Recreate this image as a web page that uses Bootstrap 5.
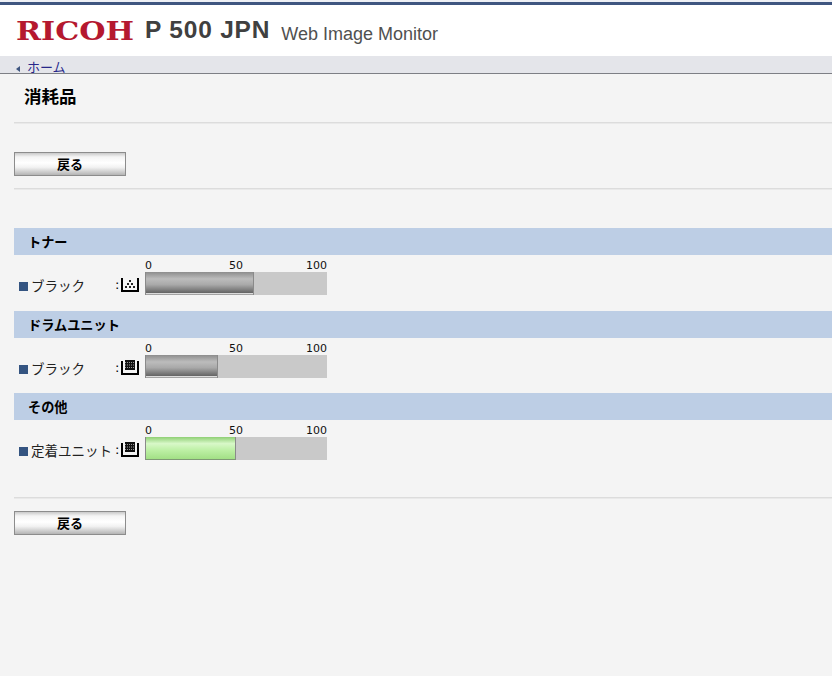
<!DOCTYPE html>
<html lang="ja">
<head>
    <meta charset="UTF-8">
    <title>Web Image Monitor</title>
    <link href="https://cdn.jsdelivr.net/npm/bootstrap@5.3.2/dist/css/bootstrap.min.css" rel="stylesheet">
    <style>
        html, body { height: 100%; }
        body {
            background: #f4f4f4;
            font-family: "Liberation Sans", "Noto Sans CJK JP", sans-serif;
            color: #000;
            overflow: hidden;
        }
        .top-head {
            height: 56px;
            background: #fff;
            border-top: 2px solid #eef0f5;
        }
        .top-rule { height: 3px; background: #3f5680; }
        .head-line { height: 51px; padding-left: 16px; }
        .brand-word {
            display: inline-block;
            width: 115px;
            font: 700 26px/26px "DejaVu Serif", serif;
            color: #b5182f;
            transform: scaleX(1.16);
            transform-origin: left center;
        }
        .model-name {
            font: 700 24.5px/28px "Liberation Sans", sans-serif;
            color: #404040;
            margin-left: 14px;
            letter-spacing: .8px;
            margin-top: -2px;
        }
        .app-name {
            font: 400 18px/22px "Liberation Sans", sans-serif;
            color: #505050;
            margin-left: 11px;
            margin-top: 6px;
        }
        .home-band {
            height: 18px;
            background: #e4e5ea;
            border-bottom: 1px solid #7d7f85;
            padding-left: 16px;
        }
        .back-arrow {
            width: 0; height: 0;
            border-top: 3.5px solid transparent;
            border-bottom: 3.5px solid transparent;
            border-right: 4px solid #3f5680;
            margin-top: 10px;
            margin-right: 7px;
        }
        .home-link {
            color: #27278a;
            font: 400 13px/15px "Noto Sans CJK JP", sans-serif;
            text-decoration: none;
            padding-top: 3px;
        }
        .page-wrap { padding-left: 14px; }
        .page-title {
            font: 700 17.5px/24px "Noto Sans CJK JP", sans-serif;
            margin: 0;
            padding: 10px 0 0 10px;
            height: 48px;
        }
        .soft-rule {
            height: 2px;
            background: #dcdcdc;
            border-bottom: 1px solid #e9e9e9;
        }
        .back-btn {
            display: block;
            width: 112px;
            height: 24px;
            padding: 0;
            border: 1px solid #8c8c8c;
            border-radius: 0;
            background: linear-gradient(#c9c9c9 0, #f4f4f4 18%, #fff 45%, #f2f2f2 65%, #b4b4b4 100%);
            font: 700 13px/22px "Noto Sans CJK JP", sans-serif;
            color: #000;
        }
        .sections-box { margin-top: 38px; margin-bottom: 21px; }
        .section-head {
            height: 27px;
            background: #bdcee5;
            font: 700 13.2px/27px "Noto Sans CJK JP", sans-serif;
            padding-left: 14px;
        }
        .item-row { height: 56px; padding-left: 5px; padding-top: 5px; }
        .item-row.tight { height: 55px; }
        .item-label {
            width: 96px;
            font: 400 13.5px/20px "Noto Sans CJK JP", sans-serif;
            color: #222;
            padding-top: 15px;
            flex: none;
            white-space: nowrap;
        }
        .blue-mark {
            display: inline-block;
            width: 9px; height: 9px;
            background: #345481;
            margin-right: 3px;
        }
        .colon-mark {
            width: 6px;
            font: 400 13px/20px "DejaVu Sans", sans-serif;
            padding-top: 15px;
        }
        .tray-icon { width: 18px; height: 16px; margin: 16px 6px 0 0; flex: none; }
        .gauge-box { width: 182px; }
        .gauge-scale {
            display: grid;
            grid-template-columns: 1fr auto 1fr;
            font: 400 11px/12px "DejaVu Sans", sans-serif;
            height: 12px;
            color: #111;
        }
        .gauge-track { height: 23px; background: #c9c9c9; }
        .gauge-fill {
            height: 100%;
            border-right: 1px solid #8a8a8a;
            border-left: 1px solid #8a8a8a;
        }
        .fill-gray {
            background: linear-gradient(#8d8d8d 0, #bcbcbc 30%, #a9a9a9 55%, #666 90%, #eee 92%, #888 100%);
        }
        .fill-green {
            background: linear-gradient(#8fcf75 0, #d8f8c8 30%, #bdf0a5 60%, #a2e085 100%);
            border-bottom: 1px solid #7f9a74;
        }
    </style>
</head>
<body>
    <header class="top-head">
        <div class="top-rule"></div>
        <div class="head-line d-flex align-items-center">
            <span class="brand-word">RICOH</span>
            <span class="model-name">P 500 JPN</span>
            <span class="app-name">Web Image Monitor</span>
        </div>
    </header>
    <nav class="home-band d-flex align-items-start">
        <span class="back-arrow"></span>
        <a class="home-link" href="#">ホーム</a>
    </nav>

    <main class="page-wrap">
        <h1 class="page-title">消耗品</h1>
        <div class="soft-rule"></div>
        <div class="pt-4 pb-2">
            <button type="button" class="back-btn mt-1">戻る</button>
        </div>
        <div class="soft-rule mt-1"></div>

        <div id="sections" class="sections-box"></div>

        <div class="soft-rule"></div>
        <div class="pt-2">
            <button type="button" class="back-btn mt-1">戻る</button>
        </div>
    </main>

    <script src="https://cdn.jsdelivr.net/npm/bootstrap@5.3.2/dist/js/bootstrap.bundle.min.js"></script>
    <script>
        const tray = '<path d="M1 2v13h16V2" fill="none" stroke="#000" stroke-width="2"/>';
        const dots = '<g fill="#222"><rect x="8" y="4" width="2" height="2"/><rect x="6" y="7" width="2" height="2"/><rect x="10" y="7" width="2" height="2"/><rect x="4" y="10" width="2" height="2"/><rect x="8" y="10" width="2" height="2"/><rect x="12" y="10" width="2" height="2"/></g>';
        const mesh = '<rect x="4" y="1" width="10" height="10" fill="#111"/><path d="M4 3.5h10M4 6h10M4 8.5h10" stroke="#bbb" stroke-width=".8" stroke-dasharray="1 1"/>';

        const data = [
            { title: "トナー", label: "ブラック", icon: dots, value: 60, cls: "fill-gray", row: "" },
            { title: "ドラムユニット", label: "ブラック", icon: mesh, value: 40, cls: "fill-gray", row: "tight" },
            { title: "その他", label: "定着ユニット", icon: mesh, value: 50, cls: "fill-green", row: "" }
        ];

        let result = '';
        for (const d of data) {
            result += `
            <div class="section-head">${d.title}</div>
            <div class="item-row ${d.row} d-flex">
                <div class="item-label"><span class="blue-mark"></span>${d.label}</div>
                <div class="colon-mark">:</div>
                <svg class="tray-icon" viewBox="0 0 18 16">${tray}${d.icon}</svg>
                <div class="gauge-box">
                    <div class="gauge-scale"><span>0</span><span>50</span><span class="text-end">100</span></div>
                    <div class="gauge-track"><div class="gauge-fill ${d.cls}" style="width:${d.value}%"></div></div>
                </div>
            </div>`;
        }
        document.getElementById('sections').innerHTML = result;
    </script>
</body>
</html>
